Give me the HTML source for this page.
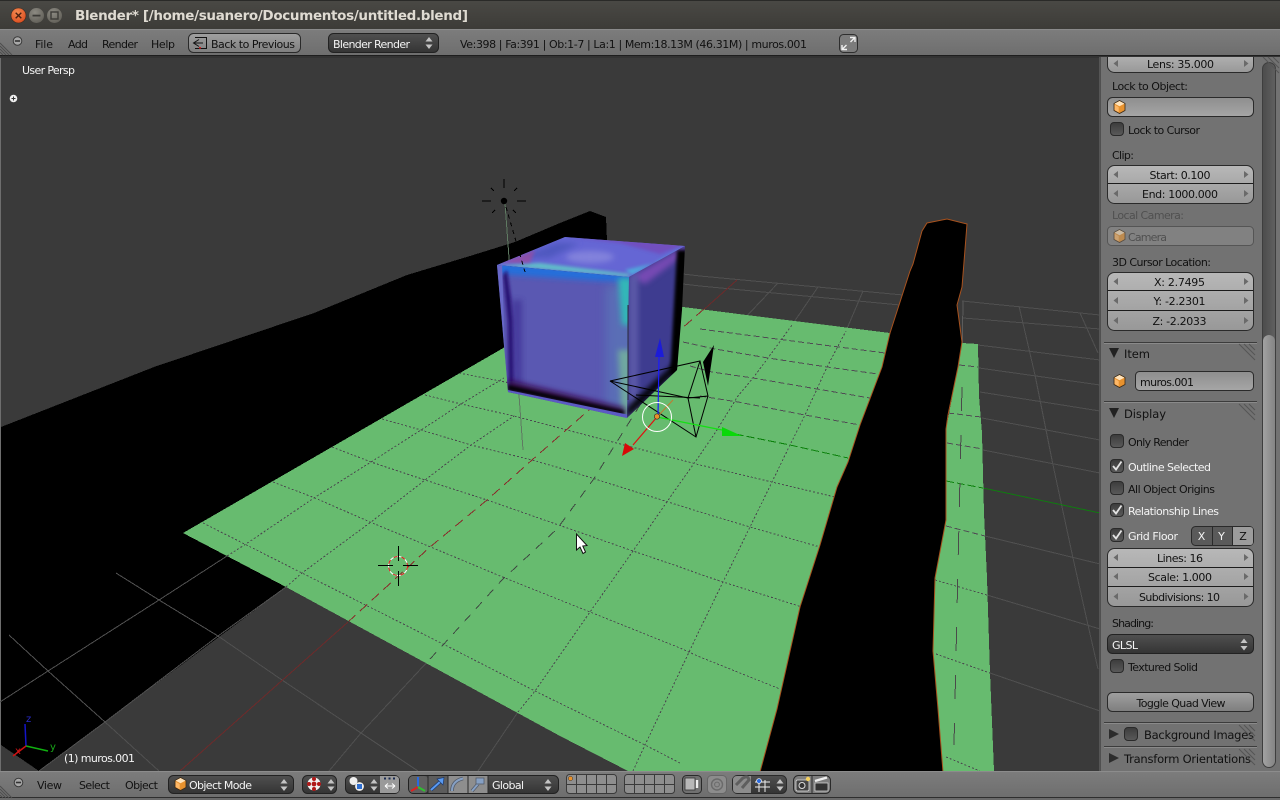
<!DOCTYPE html>
<html lang="en">
<head>
<meta charset="utf-8">
<title>Blender</title>
<style>
html,body{margin:0;padding:0;background:#393939;overflow:hidden}
svg{display:block;position:absolute;left:0;top:0}
text{font-family:"DejaVu Sans",sans-serif;font-size:11px;fill:#111;white-space:pre}
.w{fill:#f4f4f4}
.d{fill:#505050}
.m{text-anchor:middle}
</style>
</head>
<body>
<svg width="1280" height="800" viewBox="0 0 1280 800" xmlns="http://www.w3.org/2000/svg">
<defs>
<linearGradient id="gT" x1="0" y1="0" x2="0" y2="1"><stop offset="0" stop-color="#4a4945"/><stop offset="1" stop-color="#3c3b37"/></linearGradient>
<linearGradient id="gH" x1="0" y1="0" x2="0" y2="1"><stop offset="0" stop-color="#7c7c7c"/><stop offset="1" stop-color="#6e6e6e"/></linearGradient>
<linearGradient id="gN" x1="0" y1="0" x2="0" y2="1"><stop offset="0" stop-color="#b8b8b8"/><stop offset="1" stop-color="#989898"/></linearGradient>
<linearGradient id="gF" x1="0" y1="0" x2="0" y2="1"><stop offset="0" stop-color="#8e8e8e"/><stop offset="1" stop-color="#a6a6a6"/></linearGradient>
<linearGradient id="gB" x1="0" y1="0" x2="0" y2="1"><stop offset="0" stop-color="#a0a0a0"/><stop offset="1" stop-color="#7e7e7e"/></linearGradient>
<linearGradient id="gD" x1="0" y1="0" x2="0" y2="1"><stop offset="0" stop-color="#505050"/><stop offset="1" stop-color="#343434"/></linearGradient>
<linearGradient id="gC" x1="0" y1="0" x2="0" y2="1"><stop offset="0" stop-color="#3c3c3c"/><stop offset="1" stop-color="#5a5a5a"/></linearGradient>
<linearGradient id="gS" x1="0" y1="0" x2="1" y2="0"><stop offset="0" stop-color="#a2a2a2"/><stop offset="1" stop-color="#848484"/></linearGradient>
<linearGradient id="gSt" x1="0" y1="0" x2="1" y2="0"><stop offset="0" stop-color="#4c4c4c"/><stop offset="1" stop-color="#606060"/></linearGradient>
<radialGradient id="gOr" cx=".4" cy=".3" r=".8"><stop offset="0" stop-color="#f58a50"/><stop offset="1" stop-color="#d8481c"/></radialGradient>
<radialGradient id="gGr" cx=".4" cy=".3" r=".8"><stop offset="0" stop-color="#8c8a82"/><stop offset="1" stop-color="#5f5d56"/></radialGradient>
<filter id="b1" x="-50%" y="-50%" width="200%" height="200%"><feGaussianBlur stdDeviation="1.5"/></filter>
<filter id="b3" x="-50%" y="-50%" width="200%" height="200%"><feGaussianBlur stdDeviation="3"/></filter>
<filter id="b5" x="-50%" y="-50%" width="200%" height="200%"><feGaussianBlur stdDeviation="5"/></filter>
<clipPath id="cFront"><polygon points="497,265 629,277 627,418 508,392"/></clipPath>
<clipPath id="cRight"><polygon points="629,277 685,246 682,310 677,370 627,418"/></clipPath>
<clipPath id="cTop"><polygon points="497,265 565,237 685,246 629,277"/></clipPath>
<clipPath id="cLens"><rect x="1100" y="57" width="160" height="20"/></clipPath>
<clipPath id="cGreen"><polygon points="183,533 505,347 683,307 890,333 962,343 978,344 979,396 982,433 984,513 987,578 990,673 994,771 628,771 560,736 286,587"/></clipPath>
<g id="la"><polygon points="0,-3.5 0,3.5 -4.5,0" fill="#6a6a6a"/></g>
<g id="ra"><polygon points="0,-3.5 0,3.5 4.5,0" fill="#6a6a6a"/></g>
<g id="ud"><polygon points="-3.5,-1.5 3.5,-1.5 0,-6" fill="#c4c4c4"/><polygon points="-3.5,1.5 3.5,1.5 0,6" fill="#c4c4c4"/></g>
<g id="cube"><polygon points="0,-6.5 5.5,-3.5 5.5,3.5 0,6.5 -5.5,3.5 -5.5,-3.5" fill="#e8922e" stroke="#3a2a18" stroke-width=".8"/><polygon points="0,-6 5,-3.4 0,-.8 -5,-3.4" fill="#ffe3bb"/><polygon points="-5,-2.4 -.8,0 -.8,5.4 -5,3" fill="#ffb866"/></g>
<g id="chk"><rect x="0.5" y="0.5" width="13" height="13" rx="3.5" fill="url(#gC)" stroke="#2a2a2a"/></g>
<g id="tick"><path d="M3 7 L6 10.5 L11.5 2.5" fill="none" stroke="#e4e4e4" stroke-width="1.8"/></g>
<g id="hatch" stroke="#4e4e4e" stroke-width="1"><path d="M0 1 L12 13 M0 4 L9 13 M0 7 L6 13 M0 10 L3 13"/></g>
<g id="hatch2" stroke="#555" stroke-width="1"><path d="M0 0 L16 16 M5 0 L16 11 M10 0 L16 6"/></g>
<g id="mini"><circle r="4.3" fill="#a8a8a8" stroke="#3a3a3a"/><rect x="-2.6" y="-.8" width="5.2" height="1.6" fill="#333"/></g>
</defs>

<!-- window title bar -->
<rect width="1280" height="30" fill="url(#gT)"/>
<rect width="1280" height="1" fill="#2a2a28"/>
<circle cx="18.5" cy="15.5" r="7.5" fill="url(#gOr)" stroke="#3a2a20" stroke-width=".6"/>
<path d="M15.7 12.7 L21.3 18.3 M21.3 12.7 L15.7 18.3" stroke="#4a2010" stroke-width="1.4"/>
<circle cx="36.5" cy="15.5" r="7.5" fill="url(#gGr)"/>
<rect x="32.5" y="14.7" width="8" height="1.8" fill="#3c3b37"/>
<circle cx="54.5" cy="15.5" r="7.5" fill="url(#gGr)"/>
<rect x="51" y="12" width="7" height="7" fill="none" stroke="#3c3b37" stroke-width="1.4"/>
<text x="75" y="20" textLength="393" lengthAdjust="spacing" style="font-weight:bold;font-size:13.5px;fill:#dfdbd2">Blender* [/home/suanero/Documentos/untitled.blend]</text>

<!-- top header -->
<rect y="30" width="1280" height="26" fill="url(#gH)"/>
<rect y="29" width="1280" height="1" fill="#8a8a8a"/>
<rect y="55" width="1280" height="1" fill="#1e1e1e"/>
<rect y="56" width="1280" height="2" fill="#333"/>
<use href="#hatch" x="0" y="42"/>
<use href="#mini" x="17.5" y="41"/>
<text x="35" y="48" textLength="18">File</text>
<text x="68" y="48" textLength="20">Add</text>
<text x="102" y="48" textLength="36">Render</text>
<text x="151" y="48" textLength="24">Help</text>
<rect x="188.5" y="33.5" width="112" height="19" rx="5" fill="url(#gB)" stroke="#2a2a2a"/>
<path d="M195 37.5 H206.5 V48.5 H195 M199 39.5 L193.5 43 L199 46.5 M194 43 H203" fill="none" stroke="#111" stroke-width="1"/>
<rect x="199" y="47" width="2" height="1.6" fill="#c22"/>
<text x="211" y="48" textLength="84">Back to Previous</text>
<rect x="328.5" y="33.5" width="110" height="19" rx="5" fill="url(#gD)" stroke="#222"/>
<text x="333" y="48" class="w" textLength="77">Blender Render</text>
<use href="#ud" x="429" y="43"/>
<text x="460" y="48" textLength="347">Ve:398 | Fa:391 | Ob:1-7 | La:1 | Mem:18.13M (46.31M) | muros.001</text>
<rect x="839.5" y="34.5" width="18" height="18" rx="4" fill="#7c7c7c" stroke="#2e2e2e"/>
<path d="M850 37.5 H855 V42 M855 37.5 L850.5 42 M847 49.5 H842 V45 M842 49.5 L846.5 45" fill="none" stroke="#f0f0f0" stroke-width="1.4"/>

<!-- 3D viewport -->
<rect x="0" y="58" width="1100" height="714" fill="#3a3a3a"/>
<rect x="0" y="58" width="1" height="714" fill="#6e6e6e"/>

<!-- left black wall -->
<polygon shape-rendering="crispEdges" points="1,427 154,367 314,313 407,275 470,256 515,242 560,223 590,211 606,217 607,241 640,340 286,587 39,771 1,745" fill="#000"/>

<!-- solid grid on dark -->
<g fill="none" stroke="#505050" stroke-width="1" shape-rendering="crispEdges">
<polyline points="0,702 48,671 159,600 227,556 246,544 314,498 371,462 421,430 461,404 504,378"/>
<polyline points="39,771 105,722 218,636 286,587 302,573"/>
<polyline points="329,771 361,733 430,659 443,645"/>
<polyline points="478,771 518,712 535,691"/>
<polyline points="116,573 159,600 218,636 282,680 361,733 418,771"/>
<polyline points="9,635 48,671 105,722 159,771"/>
<polyline points="640,405 700,340 743,320 778,283"/>
<polyline points="768,358 792,325 818,287"/>
<polyline points="846,331 863,291"/>
<polyline points="683,274 700,276 903,295"/>
<polyline points="683,284 700,286 900,305"/>
<polyline points="962,301 1100,315"/>
<polyline points="963,318 1100,329"/>
<polyline points="978,345 1100,360"/>
<polyline points="979,368 1100,385"/>
<polyline points="980,392 1100,411"/>
<polyline points="982,418 1100,440"/>
<polyline points="983,450 1100,473"/>
<polyline points="985,536 1100,564"/>
<polyline points="987,595 1100,629"/>
<polyline points="990,673 1100,711"/>
<polyline points="1019,306 1035,375 1053,465 1073,558 1088,625 1098,669"/>
<polyline points="1080,313 1098,353"/>
<polyline points="963,301 962,362" stroke="#5c5c5c"/>
</g>
<polyline points="180,771 348,622" fill="none" stroke="#6e2a2a" shape-rendering="crispEdges"/>
<polyline points="700,313 737,280" fill="none" stroke="#6e2a2a" shape-rendering="crispEdges"/>
<polyline points="983,488 1100,513" fill="none" stroke="#107a10" shape-rendering="crispEdges"/>

<!-- green plane -->
<polygon shape-rendering="crispEdges" points="183,533 505,347 683,307 890,333 900,400 820,771 628,771 560,736 286,587" fill="#67bb6f"/>
<polygon shape-rendering="crispEdges" points="962,343 978,344 979,396 982,433 984,513 987,578 990,673 994,771 943,771 933,651 935,578 946,520 946,429 958,367" fill="#67bb6f"/>

<!-- grid on green -->
<g clip-path="url(#cGreen)" fill="none" stroke-width="1" shape-rendering="crispEdges">
<g stroke="#4a4a4e" stroke-dasharray="2 2">
<polyline points="203,523 302,573 443,644 535,691 645,745 680,763"/>
<polyline points="273,482 315,498 370,522 433,548 505,578 590,612 680,648 700,657 780,689"/>
<polyline points="332,447 371,462 425,480 487,500 553,523 633,551 680,567 702,575 723,582 802,607"/>
<polyline points="382,419 421,430 471,445 532,460 560,468 700,512 750,527 820,547"/>
<polyline points="425,395 461,404 514,416 700,465 772,482 835,497"/>
<polyline points="459,373 500,381 520,385"/>
<polyline points="227,556 246,544 314,498 371,462 421,430 461,404 504,378"/>
<polyline points="286,587 302,573 371,522 425,480 471,445 514,416"/>
<polyline points="518,712 535,691 590,612 633,551 673,493 700,455 715,433 738,396 753,378 768,358 792,325"/>
<polyline points="633,771 645,745 700,629 723,582 750,527 772,482 790,445 805,415 817,389 827,367 846,331"/>
<polyline points="936,654 990,673"/>
<polyline points="935,580 987,595"/>
<polyline points="946,757 980,771"/>
</g>
<g stroke="#504c54" stroke-dasharray="6 3">
<polyline points="700,329 885,353"/>
<polyline points="683,342 715,349 768,358 827,367 878,374"/>
<polyline points="690,366 712,372 753,378 817,389 870,398"/>
<polyline points="700,396 738,402 805,415 860,425"/>
<polyline points="959,365 978,367"/>
<polyline points="948,413 981,417"/>
<polyline points="947,443 983,449"/>
<polyline points="946,526 985,536"/>
</g>
<polyline points="430,659 443,645 502,580 557,529 593,480 640,405" stroke="#3f4a42" stroke-dasharray="9 8"/>
<polyline points="348,622 430,547 487,500 532,460 737,280" stroke="#8a2a2a" stroke-dasharray="10 6"/>
<polyline points="725,432 790,445 848,458" stroke="#0c820c" stroke-dasharray="8 3"/>
<polyline points="946,481 983,488" stroke="#0c820c" stroke-dasharray="8 3"/>
<polyline points="962,387 954,745" stroke="#4a4a4a" stroke-width="1" stroke-dasharray="24 24"/>
</g>

<!-- lamp relation line behind cube -->
<line x1="505" y1="203" x2="523" y2="450" stroke="#5f7a62" shape-rendering="crispEdges"/>

<!-- cube -->
<polygon points="497,265 565,237 685,246 629,277" fill="#6464d0"/>
<g clip-path="url(#cTop)">
<polygon points="497,265 565,237 685,246 629,277" fill="#6566d4"/>
<ellipse cx="590" cy="257" rx="24" ry="6" fill="#8282dc" filter="url(#b3)"/>
<polygon points="520,258 555,243 580,243 550,258" fill="#5058c0" filter="url(#b3)"/>
<polygon points="565,236 686,244 660,254 620,243" fill="#7a40b0" opacity=".6" filter="url(#b1)"/>
<polygon points="632,275 684,247 660,262 625,270" fill="#50a8dc" filter="url(#b1)"/>
<polygon points="497,265 629,277 629,274 540,263" fill="#60c8c8" opacity=".9" filter="url(#b1)"/>
<polygon points="500,263 535,250 530,263" fill="#a04a9a" opacity=".7" filter="url(#b1)"/>
</g>
<g clip-path="url(#cFront)">
<polygon points="497,265 629,277 627,418 508,392" fill="#5a58b2"/>
<polygon points="497,262 632,274 632,283 497,274" fill="#2470dc" filter="url(#b3)"/>
<polygon points="606,285 640,285 640,420 606,420" fill="#5a78b8" opacity=".7" filter="url(#b5)"/>
<polygon points="618,278 632,278 632,325 622,325" fill="#30b8b8" filter="url(#b3)"/>
<polygon points="618,350 632,350 632,418 622,418" fill="#70a8a0" filter="url(#b3)"/>
<polygon points="503,275 507,270 511,300 513,320 514,395 509,395 508,322 506,302" fill="#280e70" filter="url(#b1)"/>
<polygon points="512,300 522,300 522,390 514,390" fill="#3a2a90" opacity=".6" filter="url(#b3)"/>
<polygon points="497,262 502,262 506,395 497,395" fill="#6868c8"/>
<polygon points="508,380 625,408 625,416 508,390" fill="#38104e" filter="url(#b3)"/>
<polygon points="508,385 624,411 624,415 508,390" fill="#000" filter="url(#b1)"/>
<polygon points="508,390 627,414.5 627,420 508,396" fill="#5c5ac4"/>
</g>
<g clip-path="url(#cRight)">
<polygon points="629,277 685,246 677,370 627,418" fill="#3e3c90"/>
<polygon points="631,277 685,246 685,254 645,284" fill="#8a50c0" opacity=".75" filter="url(#b3)"/>
<polygon points="629,277 638,272 638,420 629,420" fill="#5c5aa8" filter="url(#b3)"/>
<polygon points="677,250 690,250 690,375 670,375" fill="#000" filter="url(#b1)"/>
<polygon points="627,418 680,368 680,358 640,395 627,408" fill="#000" filter="url(#b3)"/>
</g>
<line x1="628" y1="305" x2="628" y2="400" stroke="#2a2a3a"/>

<!-- lamp -->
<circle cx="504" cy="201" r="3.2" fill="#000"/>
<g stroke="#000" stroke-width="1" fill="none" shape-rendering="crispEdges">
<path d="M504 179 V188 M482 201 H491 M517 201 H526 M491 188 L494 191 M517 188 L514 191 M492 213 L495 210 M516 213 L513 210"/>
<path d="M506 207 L525 272" stroke-dasharray="4 4"/>
</g>

<!-- camera -->
<g fill="none" stroke="#000" stroke-width="1">
<path d="M610 381 L700 361 L708 396 L688 398 Z"/>
<path d="M610 381 L696 437 L708 396 M700 361 L688 398 L696 437"/>
<path d="M636 395 L700 398"/>
</g>
<polygon points="714,345 703,362 708,386" fill="#000"/>

<!-- transform widget -->
<line x1="657" y1="417" x2="673" y2="400" stroke="#c07a30"/>
<line x1="658" y1="417" x2="659" y2="357" stroke="#1a1aff" stroke-width="1.2"/>
<polygon points="660,338 655,357 664,357" fill="#1c1cd8"/>
<line x1="657" y1="417" x2="633" y2="445" stroke="#e01010" stroke-width="1.2"/>
<polygon points="622,456 625,443 634,449" fill="#d80808"/>
<line x1="657" y1="417" x2="722" y2="430" stroke="#14e014" stroke-width="1.2"/>
<polygon points="742,436 722,427 722,436" fill="#0ad80a"/>
<circle cx="657" cy="417" r="14.5" fill="none" stroke="#fff" stroke-width="1"/>
<circle cx="657" cy="416.5" r="2.7" fill="#e8902a" stroke="#222" stroke-width=".6"/>

<!-- 3D cursor -->
<circle cx="398" cy="566" r="9.5" fill="none" stroke="#fff"/>
<circle cx="398" cy="566" r="9.5" fill="none" stroke="#e01010" stroke-dasharray="4 4"/>
<path d="M378 565.5 H393 M403 565.5 H418 M398.5 546 V561 M398.5 571 V586" stroke="#000" fill="none" shape-rendering="crispEdges"/>

<!-- black right wall -->
<polygon points="760,772 777,709 800,607 820,545 837,487 848,462 860,425 882,367 890,333 900,302 910,271 913,264 922,231 927,223 947,219 967,224 964,262 962,287 957,305 962,342 958,367 948,415 946,429 946,520 935,578 933,651 938,709 943,772" fill="#000" stroke="#a8521e" stroke-width="1"/>

<!-- mouse pointer -->
<path d="M576.5 534 V550 L580 547 L583 553.5 L585.5 552 L582.8 546 L587 545.5 Z" fill="#fff" stroke="#111" stroke-width="1"/>

<!-- viewport labels -->
<text x="22" y="74" class="w" textLength="53">User Persp</text>
<circle cx="13.5" cy="98.5" r="3.8" fill="#eee"/>
<path d="M11.5 98.5 H15.5 M13.5 96.5 V100.5" stroke="#333" stroke-width="1"/>
<text x="64" y="762" class="w" textLength="71">(1) muros.001</text>

<!-- axes -->
<g fill="none" stroke-width="1.5">
<path d="M26 746 L25 724" stroke="#1414c8"/>
<path d="M26 746 L48 751" stroke="#10b010"/>
<path d="M26 746 L13 756" stroke="#d01010"/>
</g>
<text x="26" y="722" style="fill:#2a2ac8;font-size:10px">z</text>
<text x="50" y="750" style="fill:#18a818;font-size:10px">y</text>
<text x="15" y="754" style="fill:#c81818;font-size:10px">x</text>

<!-- sidebar -->
<rect x="1099" y="57" width="181" height="715" fill="#727272"/>
<rect x="1099" y="57" width="1" height="715" fill="#555"/>
<rect x="1100" y="57" width="1" height="715" fill="#2d2d2d" opacity=".5"/>
<rect x="1262.5" y="62.5" width="13" height="705" rx="6.5" fill="url(#gSt)" stroke="#3e3e3e"/>
<rect x="1263" y="335" width="12" height="432" rx="6" fill="url(#gS)"/>
<use href="#hatch2" x="1263" y="57"/>

<!-- Lens -->
<g clip-path="url(#cLens)"><rect x="1107.5" y="50.5" width="146" height="22" rx="7" fill="url(#gN)" stroke="#2a2a2a"/></g>
<use href="#la" x="1118" y="63.5"/><use href="#ra" x="1244" y="63.5"/>
<text x="1180.5" y="68" class="m" textLength="67">Lens: 35.000</text>
<text x="1112" y="90" textLength="76">Lock to Object:</text>
<rect x="1107.5" y="97.5" width="146" height="19" rx="5" fill="url(#gF)" stroke="#2a2a2a"/>
<use href="#cube" x="1119.5" y="107"/>
<use href="#chk" x="1110" y="122"/>
<text x="1128" y="134" textLength="72">Lock to Cursor</text>

<text x="1112" y="159" textLength="22">Clip:</text>
<rect x="1107.5" y="165.5" width="146" height="38" rx="7" fill="url(#gN)" stroke="#2a2a2a"/>
<rect x="1108" y="183" width="145" height="1" fill="#1c1c1c"/>
<use href="#la" x="1118" y="174.5"/><use href="#ra" x="1244" y="174.5"/>
<use href="#la" x="1118" y="193.5"/><use href="#ra" x="1244" y="193.5"/>
<text x="1180" y="179" class="m" textLength="61">Start: 0.100</text>
<text x="1180" y="198" class="m" textLength="76">End: 1000.000</text>

<text x="1112" y="219" class="d" textLength="72">Local Camera:</text>
<rect x="1107.5" y="226.5" width="146" height="19" rx="4" fill="#818181" stroke="#555"/>
<g opacity=".6"><use href="#cube" x="1119.5" y="236"/></g>
<text x="1128" y="241" class="d" textLength="39">Camera</text>

<text x="1112" y="266" textLength="99">3D Cursor Location:</text>
<rect x="1107.5" y="272.5" width="146" height="58" rx="7" fill="url(#gN)" stroke="#2a2a2a"/>
<rect x="1108" y="290" width="145" height="1" fill="#1c1c1c"/>
<rect x="1108" y="310" width="145" height="1" fill="#1c1c1c"/>
<use href="#la" x="1118" y="281.5"/><use href="#ra" x="1244" y="281.5"/>
<use href="#la" x="1118" y="300.5"/><use href="#ra" x="1244" y="300.5"/>
<use href="#la" x="1118" y="320.5"/><use href="#ra" x="1244" y="320.5"/>
<text x="1179.5" y="286" class="m" textLength="51">X: 2.7495</text>
<text x="1179.5" y="305" class="m" textLength="52">Y: -2.2301</text>
<text x="1179.5" y="325" class="m" textLength="54">Z: -2.2033</text>

<!-- Item -->
<rect x="1104" y="342" width="153" height="1" fill="#3c3c3c"/>
<rect x="1104" y="343" width="153" height="1" fill="#8a8a8a"/>
<use href="#hatch2" x="1239" y="344"/>
<polygon points="1109,348 1119,348 1114,358" fill="#222"/>
<text x="1124" y="358" style="font-size:11.5px" textLength="26">Item</text>
<use href="#cube" x="1119.5" y="381"/>
<rect x="1135.5" y="371.5" width="118" height="19" rx="4" fill="url(#gF)" stroke="#2a2a2a"/>
<text x="1140" y="386" textLength="54">muros.001</text>

<!-- Display -->
<rect x="1104" y="401" width="153" height="1" fill="#3c3c3c"/>
<rect x="1104" y="402" width="153" height="1" fill="#8a8a8a"/>
<use href="#hatch2" x="1239" y="404"/>
<polygon points="1109,408 1119,408 1114,418" fill="#222"/>
<text x="1124" y="418" style="font-size:11.5px" textLength="42">Display</text>
<use href="#chk" x="1110" y="434"/>
<text x="1128" y="446" textLength="61">Only Render</text>
<use href="#chk" x="1110" y="459"/><use href="#tick" x="1110" y="459"/>
<text x="1128" y="471" class="w" textLength="83">Outline Selected</text>
<use href="#chk" x="1110" y="481"/>
<text x="1128" y="493" textLength="87">All Object Origins</text>
<use href="#chk" x="1110" y="503"/><use href="#tick" x="1110" y="503"/>
<text x="1128" y="515" class="w" textLength="91">Relationship Lines</text>
<use href="#chk" x="1110" y="528"/><use href="#tick" x="1110" y="528"/>
<text x="1128" y="540" class="w" textLength="50">Grid Floor</text>
<rect x="1191.5" y="526.5" width="62" height="19" rx="4" fill="#5a5a5a" stroke="#2a2a2a"/>
<path d="M1233 527 H1250 Q1253 527 1253 530 V542 Q1253 545 1250 545 H1233 Z" fill="#9c9c9c"/>
<path d="M1212.5 527 V545 M1232.5 527 V545" stroke="#2a2a2a"/>
<text x="1201.5" y="540" class="m w">X</text>
<text x="1221.5" y="540" class="m w">Y</text>
<text x="1243" y="540" class="m">Z</text>

<rect x="1107.5" y="548.5" width="146" height="58" rx="7" fill="url(#gN)" stroke="#2a2a2a"/>
<rect x="1108" y="567" width="145" height="1" fill="#1c1c1c"/>
<rect x="1108" y="586" width="145" height="1" fill="#1c1c1c"/>
<use href="#la" x="1118" y="557.5"/><use href="#ra" x="1244" y="557.5"/>
<use href="#la" x="1118" y="576.5"/><use href="#ra" x="1244" y="576.5"/>
<use href="#la" x="1118" y="596.5"/><use href="#ra" x="1244" y="596.5"/>
<text x="1180" y="562" class="m" textLength="46">Lines: 16</text>
<text x="1180" y="581" class="m" textLength="64">Scale: 1.000</text>
<text x="1179.5" y="601" class="m" textLength="81">Subdivisions: 10</text>

<text x="1112" y="627" textLength="42">Shading:</text>
<rect x="1107.5" y="634.5" width="146" height="19" rx="5" fill="url(#gD)" stroke="#222"/>
<text x="1112" y="649" class="w" textLength="26">GLSL</text>
<use href="#ud" x="1244" y="644.5"/>
<use href="#chk" x="1110" y="659"/>
<text x="1128" y="671" textLength="70">Textured Solid</text>
<rect x="1107.5" y="692.5" width="146" height="19" rx="5" fill="url(#gB)" stroke="#2a2a2a"/>
<text x="1181" y="707" class="m" textLength="89">Toggle Quad View</text>

<rect x="1104" y="722" width="153" height="1" fill="#3c3c3c"/>
<rect x="1104" y="723" width="153" height="1" fill="#8a8a8a"/>
<polygon points="1109,729 1109,739 1119,734" fill="#2c2c2c"/>
<use href="#chk" x="1124" y="727"/>
<text x="1144" y="739" style="font-size:11.5px" textLength="110">Background Images</text>
<use href="#hatch2" x="1239" y="725"/>
<rect x="1104" y="746" width="153" height="1" fill="#3c3c3c"/>
<rect x="1104" y="747" width="153" height="1" fill="#8a8a8a"/>
<polygon points="1109,753 1109,763 1119,758" fill="#2c2c2c"/>
<text x="1124" y="763" style="font-size:11.5px" textLength="127">Transform Orientations</text>
<use href="#hatch2" x="1239" y="749"/>

<!-- bottom header -->
<rect y="772" width="1280" height="26" fill="url(#gH)"/>
<rect y="771" width="1280" height="1" fill="#8c8c8c"/>
<rect y="797" width="1280" height="1" fill="#2e2e2e"/>
<rect y="798" width="1280" height="2" fill="#6a6a6a"/>
<use href="#hatch" x="0" y="785"/>
<use href="#mini" x="18.5" y="782.5"/>
<text x="37" y="789" textLength="25">View</text>
<text x="79" y="789" textLength="31">Select</text>
<text x="125" y="789" textLength="33">Object</text>

<rect x="168.5" y="775.5" width="125" height="18" rx="5" fill="url(#gD)" stroke="#222"/>
<use href="#cube" x="180.5" y="784"/>
<text x="189" y="789" class="w" textLength="63">Object Mode</text>
<use href="#ud" x="284" y="785"/>

<rect x="302.5" y="775.5" width="34" height="18" rx="5" fill="url(#gD)" stroke="#222"/>
<circle cx="314" cy="784" r="6.5" fill="#f0f0f0"/>
<circle cx="314" cy="784" r="2.4" fill="#b01818"/>
<circle cx="314" cy="779" r="2" fill="#b01818"/><circle cx="314" cy="789" r="2" fill="#b01818"/><circle cx="309" cy="784" r="2" fill="#b01818"/><circle cx="319" cy="784" r="2" fill="#b01818"/>
<use href="#ud" x="331" y="785"/>

<rect x="345.5" y="775.5" width="54" height="18" rx="5" fill="url(#gD)" stroke="#222"/>
<path d="M380 776 H395 Q399 776 399 780 V789 Q399 793 395 793 H380 Z" fill="#9a9a9a"/>
<circle cx="353.5" cy="781" r="4" fill="#eee"/>
<circle cx="359.5" cy="786.5" r="4.4" fill="#eee"/>
<rect x="357" y="784" width="5" height="5" fill="#2f6fd0"/>
<use href="#ud" x="374" y="785"/>
<path d="M384 778.5 H386 M388.5 778.5 H390.5 M393 778.5 H395" stroke="#1a2a50" stroke-width="2"/>
<path d="M385 786 H395 M385 786 L388 783.5 M385 786 L388 788.5 M395 786 L392 783.5 M395 786 L392 788.5" stroke="#fff" stroke-width="1" fill="none"/>

<rect x="408.5" y="775.5" width="150" height="18" rx="5" fill="url(#gD)" stroke="#222"/>
<rect x="409" y="776" width="19" height="17" rx="4" fill="#606060"/>
<rect x="428" y="776" width="20" height="17" fill="#5c5c5c"/>
<rect x="448" y="776" width="40" height="17" fill="#8e8e8e"/>
<path d="M428 776 V793 M448 776 V793 M468 776 V793 M488 776 V793" stroke="#2a2a2a"/>
<path d="M418 787 V777" stroke="#2a6ae0" stroke-width="2"/>
<path d="M418 787 L411 791" stroke="#e02020" stroke-width="2"/>
<path d="M418 787 L425 791" stroke="#30c030" stroke-width="2"/>
<path d="M431 790 L441 781" stroke="#1c3a70" stroke-width="3.4" fill="none"/>
<path d="M431 790 L441 781" stroke="#5a9af0" stroke-width="2" fill="none"/>
<polygon points="437,779 444,777.5 443,785" fill="#5a9af0" stroke="#1c3a70" stroke-width=".7"/>
<path d="M452 791 Q452 781 463 778.5" stroke="#525a68" stroke-width="3.6" fill="none"/>
<path d="M452 791 Q452 781 463 778.5" stroke="#86a0c4" stroke-width="2" fill="none"/>
<path d="M472 791 L478 784" stroke="#525a68" stroke-width="3.4"/>
<path d="M472 791 L478 784" stroke="#86a0c4" stroke-width="2"/>
<rect x="476" y="778" width="8" height="6" fill="#86a0c4" stroke="#525a68" stroke-width=".8"/>
<text x="492" y="789" class="w" textLength="32">Global</text>
<use href="#ud" x="548" y="785"/>

<g fill="#8e8e8e" stroke="#3a3a3a">
<rect x="566.5" y="774.5" width="50" height="19" rx="3"/>
<rect x="624.5" y="774.5" width="50" height="19" rx="3"/>
</g>
<path d="M566.5 784.5 H616.5 M576.5 774.5 V793.5 M586.5 774.5 V793.5 M596.5 774.5 V793.5 M606.5 774.5 V793.5 M624.5 784.5 H674.5 M634.5 774.5 V793.5 M644.5 774.5 V793.5 M654.5 774.5 V793.5 M664.5 774.5 V793.5" stroke="#3a3a3a" fill="none"/>
<circle cx="570.5" cy="778.5" r="2.2" fill="#e8902a" stroke="#333" stroke-width=".5"/>

<rect x="682.5" y="775.5" width="19" height="18" rx="4" fill="#707070" stroke="#2a2a2a"/>
<rect x="685" y="778" width="10" height="12" fill="#b8b8b8" stroke="#333" stroke-width=".8"/>
<path d="M697 780 v8" stroke="#eee" stroke-width="2.4"/>
<rect x="707.5" y="775.5" width="19" height="18" rx="4" fill="#8c8c8c" stroke="#666"/>
<circle cx="717" cy="784.5" r="5.5" fill="none" stroke="#6a6a6a" stroke-width="1.4"/>
<circle cx="717" cy="784.5" r="2.4" fill="none" stroke="#6a6a6a"/>
<rect x="732.5" y="775.5" width="54" height="18" rx="5" fill="url(#gD)" stroke="#2a2a2a"/>
<path d="M733 780 Q733 776 737 776 H751 V793 H737 Q733 793 733 789 Z" fill="#8c8c8c"/>
<path d="M736 785 L743 778 Q748 775 749 780 L742 788" fill="none" stroke="#5e5e5e" stroke-width="3"/>
<path d="M755 787 H770 M759 780 V792 M765 780 V792 M755 782 H770" stroke="#eee" stroke-width="1" fill="none"/>
<circle cx="759" cy="781" r="2.4" fill="#2a6ae0" stroke="#eee" stroke-width=".8"/>
<use href="#ud" x="780" y="785"/>
<rect x="793.5" y="775.5" width="37" height="18" rx="5" fill="#7e7e7e" stroke="#2a2a2a"/>
<path d="M812 776 V793" stroke="#2a2a2a"/>
<rect x="796" y="780" width="13" height="11" rx="1.5" fill="#444" stroke="#ddd" stroke-width=".8"/>
<circle cx="802" cy="785.5" r="3" fill="#333" stroke="#ddd"/>
<circle cx="808" cy="779" r="2.2" fill="#f4d060"/>
<rect x="815" y="783" width="13" height="8" fill="#333" stroke="#ddd" stroke-width=".7"/>
<path d="M815 781 L827 777.5" stroke="#eee" stroke-width="2.4"/>
</svg>
</body>
</html>
